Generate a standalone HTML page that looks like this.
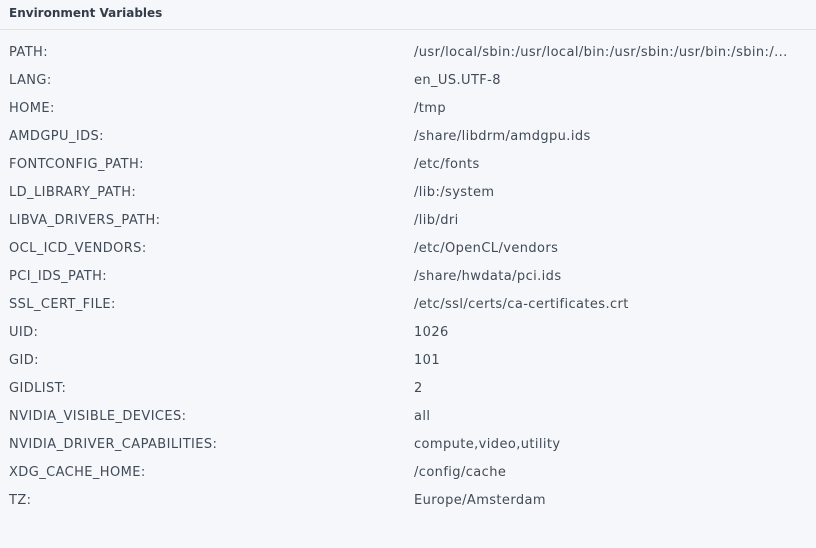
<!DOCTYPE html>
<html><head><meta charset="utf-8"><style>
html,body{margin:0;padding:0;}
body{width:816px;height:548px;background:#f5f7fa;font-family:"DejaVu Sans","Liberation Sans",sans-serif;color:#414b58;overflow:hidden;position:relative;}
.h{position:absolute;left:9px;top:6px;font-weight:bold;font-size:12px;color:#333c4a;letter-spacing:0px;}
.line{position:absolute;left:0;top:29px;width:816px;height:1px;background:#dde1e8;}
.r{position:absolute;left:0;height:28px;width:816px;font-size:13px;letter-spacing:0.4px;}
.r span{position:absolute;top:0;}
.k{left:9px}.v{left:414px}
</style></head><body>
<div class="h">Environment Variables</div>
<div class="line"></div>
<div class="r" style="top:45px"><span class="k">PATH:</span><span class="v">/usr/local/sbin:/usr/local/bin:/usr/sbin:/usr/bin:/sbin:/...</span></div>
<div class="r" style="top:73px"><span class="k">LANG:</span><span class="v">en_US.UTF-8</span></div>
<div class="r" style="top:101px"><span class="k">HOME:</span><span class="v">/tmp</span></div>
<div class="r" style="top:129px"><span class="k">AMDGPU_IDS:</span><span class="v">/share/libdrm/amdgpu.ids</span></div>
<div class="r" style="top:157px"><span class="k">FONTCONFIG_PATH:</span><span class="v">/etc/fonts</span></div>
<div class="r" style="top:185px"><span class="k">LD_LIBRARY_PATH:</span><span class="v">/lib:/system</span></div>
<div class="r" style="top:213px"><span class="k">LIBVA_DRIVERS_PATH:</span><span class="v">/lib/dri</span></div>
<div class="r" style="top:241px"><span class="k">OCL_ICD_VENDORS:</span><span class="v">/etc/OpenCL/vendors</span></div>
<div class="r" style="top:269px"><span class="k">PCI_IDS_PATH:</span><span class="v">/share/hwdata/pci.ids</span></div>
<div class="r" style="top:297px"><span class="k">SSL_CERT_FILE:</span><span class="v">/etc/ssl/certs/ca-certificates.crt</span></div>
<div class="r" style="top:325px"><span class="k">UID:</span><span class="v">1026</span></div>
<div class="r" style="top:353px"><span class="k">GID:</span><span class="v">101</span></div>
<div class="r" style="top:381px"><span class="k">GIDLIST:</span><span class="v">2</span></div>
<div class="r" style="top:409px"><span class="k">NVIDIA_VISIBLE_DEVICES:</span><span class="v">all</span></div>
<div class="r" style="top:437px"><span class="k">NVIDIA_DRIVER_CAPABILITIES:</span><span class="v">compute,video,utility</span></div>
<div class="r" style="top:465px"><span class="k">XDG_CACHE_HOME:</span><span class="v">/config/cache</span></div>
<div class="r" style="top:493px"><span class="k">TZ:</span><span class="v">Europe/Amsterdam</span></div>
</body></html>
